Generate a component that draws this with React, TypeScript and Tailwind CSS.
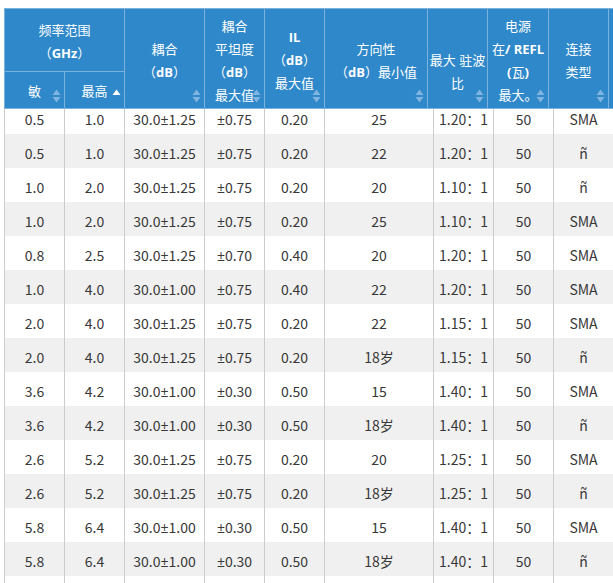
import React from "react";

const FONT = { fontFamily: '"Open Sans", "Noto Sans CJK SC", sans-serif' };
const BODY_FONT = { fontFamily: '"Noto Sans CJK SC", "Open Sans", sans-serif' };
const PM_FONT = { fontFamily: '"Open Sans", sans-serif' };

function Mixed({ text }: { text: string }) {
  const parts = text.match(/[\u3000-\u9fff\uff00-\uffef]+|[^\u3000-\u9fff\uff00-\uffef]+/g) || [];
  return (
    <>
      {parts.map((p, i) =>
        /[\u3000-\u9fff\uff00-\uffef]/.test(p) ? (
          <span key={i} className="font-normal">
            {p}
          </span>
        ) : (
          <span key={i} className="font-bold">
            {p}
          </span>
        )
      )}
    </>
  );
}

function BodyText({ text }: { text: string }) {
  const parts = text.split("±");
  if (parts.length === 1) return <>{text}</>;
  return (
    <>
      {parts[0]}
      <span style={PM_FONT}>±</span>
      {parts[1]}
    </>
  );
}

function SortIcon({ active }: { active?: boolean }) {
  return (
    <svg
      className="absolute right-[3px] bottom-[5px]"
      width="9"
      height="14"
      viewBox="0 0 9 14"
    >
      <path d="M4.5 0.5 L8.5 6 L0.5 6 Z" fill={active ? "#ffffff" : "#7fb5df"} />
      {!active && <path d="M0.5 8 L8.5 8 L4.5 13.5 Z" fill="#7fb5df" />}
    </svg>
  );
}

function HCell({
  lines,
  className,
  sort = true,
  active,
}: {
  lines: string[];
  className: string;
  sort?: boolean;
  active?: boolean;
}) {
  return (
    <div
      className={
        "relative flex flex-col items-center justify-center border-r border-b border-[#7cb1dc] text-center text-[13px] leading-[23px] " +
        className
      }
    >
      {lines.map((l, i) => (
        <div key={i} className="whitespace-nowrap">
          <Mixed text={l} />
        </div>
      ))}
      {sort && <SortIcon active={active} />}
    </div>
  );
}

const rows: string[][] = [
  ["0.5", "1.0", "30.0±1.25", "±0.75", "0.20", "25", "1.20：1", "50", "SMA"],
  ["0.5", "1.0", "30.0±1.25", "±0.75", "0.20", "22", "1.20：1", "50", "ñ"],
  ["1.0", "2.0", "30.0±1.25", "±0.75", "0.20", "20", "1.10：1", "50", "ñ"],
  ["1.0", "2.0", "30.0±1.25", "±0.75", "0.20", "25", "1.10：1", "50", "SMA"],
  ["0.8", "2.5", "30.0±1.25", "±0.70", "0.40", "20", "1.20：1", "50", "SMA"],
  ["1.0", "4.0", "30.0±1.00", "±0.75", "0.40", "22", "1.20：1", "50", "SMA"],
  ["2.0", "4.0", "30.0±1.25", "±0.75", "0.20", "22", "1.15：1", "50", "SMA"],
  ["2.0", "4.0", "30.0±1.25", "±0.75", "0.20", "18岁", "1.15：1", "50", "ñ"],
  ["3.6", "4.2", "30.0±1.00", "±0.30", "0.50", "15", "1.40：1", "50", "SMA"],
  ["3.6", "4.2", "30.0±1.00", "±0.30", "0.50", "18岁", "1.40：1", "50", "ñ"],
  ["2.6", "5.2", "30.0±1.25", "±0.75", "0.20", "20", "1.25：1", "50", "SMA"],
  ["2.6", "5.2", "30.0±1.25", "±0.75", "0.20", "18岁", "1.25：1", "50", "ñ"],
  ["5.8", "6.4", "30.0±1.00", "±0.30", "0.50", "15", "1.40：1", "50", "SMA"],
  ["5.8", "6.4", "30.0±1.00", "±0.30", "0.50", "18岁", "1.40：1", "50", "ñ"],
  ["", "", "", "", "", "", "", "", ""],
];

export default function App() {
  return (
    <div className="h-[583px] w-[613px] overflow-hidden bg-white" style={FONT}>
      <div className="ml-[4px] mt-[8px]">
        {/* header */}
        <div className="grid grid-cols-[60px_60px_80px_60px_60px_103px_60px_61px_60px_1fr] grid-rows-[63px_37px] border-l border-t border-[#7cb1dc] bg-[#2e88c9] text-white">
          <HCell
            lines={["频率范围", "（GHz）"]}
            sort={false}
            className="col-span-2 col-start-1 row-start-1 pt-[3px]"
          />
          <HCell lines={["耦合", "（dB）"]} className="col-start-3 row-start-1 row-span-2 pt-[4px]" />
          <HCell
            lines={["耦合", "平坦度", "（dB）", "最大值"]}
            className="col-start-4 row-start-1 row-span-2 pt-[4px]"
          />
          <HCell
            lines={["IL", "（dB）", "最大值"]}
            className="col-start-5 row-start-1 row-span-2 pt-[4px]"
          />
          <HCell
            lines={["方向性", "（dB）最小值"]}
            className="col-start-6 row-start-1 row-span-2 pt-[4px]"
          />
          <HCell
            lines={["\u00a0", "最大 驻波", "比"]}
            className="col-start-7 row-start-1 row-span-2 pt-[4px]"
          />
          <HCell
            lines={["电源", "在/ REFL", "(瓦)", "最大。"]}
            className="col-start-8 row-start-1 row-span-2 pt-[4px]"
          />
          <HCell lines={["连接", "类型"]} className="col-start-9 row-start-1 row-span-2 pt-[4px]" />
          <div className="col-start-10 row-start-1 row-span-2 border-b border-[#7cb1dc]" />
          <HCell lines={["敏"]} className="col-start-1 row-start-2 pt-[2px]" />
          <HCell lines={["最高"]} active className="col-start-2 row-start-2 pt-[2px]" />
        </div>

        {/* body */}
        <div className="h-[474px] overflow-hidden border-l border-[#cccccc]" style={BODY_FONT}>
          <div className="-mt-[9px]">
            {rows.map((r, i) => (
              <div
                key={i}
                className={
                  "grid h-[34px] grid-cols-[60px_60px_80px_60px_60px_109px_60px_60px_60px] text-[14px] text-[#383838] " +
                  (i % 2 === 1 ? "bg-[#f0f0f0]" : "bg-white")
                }
              >
                {r.map((c, j) => (
                  <div
                    key={j}
                    className="flex items-center justify-center border-r border-[#cccccc] pt-[5px] whitespace-nowrap"
                  >
                    <BodyText text={c} />
                  </div>
                ))}
              </div>
            ))}
          </div>
        </div>
      </div>
    </div>
  );
}
